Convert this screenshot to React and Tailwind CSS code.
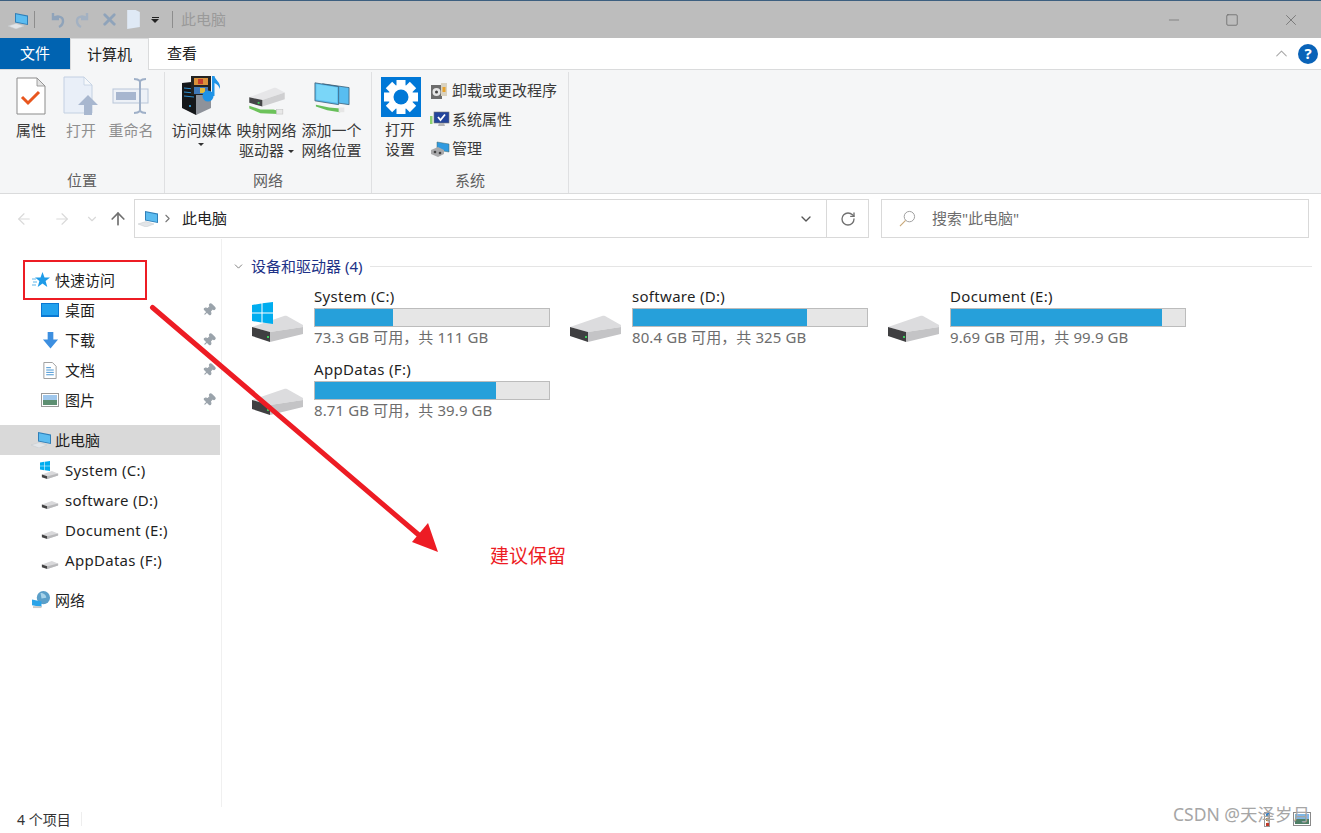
import React from 'react'
import { ArrowLeft, ArrowRight, ArrowUp, ChevronDown, ChevronRight, ChevronUp, RotateCw, Minus, Square, X, Pin } from 'lucide-react'

const font = { fontFamily: '"Noto Sans", "Noto Sans CJK SC", sans-serif' }

const PcIcon = ({ className }) => (
  <svg viewBox="0 0 20 16" className={className}>
    <path d="M7 0l13 2.500v9.500L7 9.500z" fill="#2f7fb8" />
    <path d="M8 1.300l11 2.100v7.600L8 8.800z" fill="#5cbcf0" />
    <path d="M0 13l8-2.500 8 2.500-8 3z" fill="#e2e5e8" stroke="#c4c8cc" strokeWidth="0.5" />
  </svg>
)

const WinLogo = ({ className }) => (
  <svg viewBox="0 0 22 22" className={className}>
    <path d="M0 3.200l9.600-1.400v8.600H0zM10.800 1.600L22 0v10.400H10.800zM0 11.600h9.600v8.600L0 18.800zM10.800 11.600H22V22l-11.200-1.600z" fill="#00adef" />
  </svg>
)

const Drive = ({ className, win }) => (
  <svg viewBox="0 0 56 44" className={className}>
    <path d="M2 27L34 16c1-.3 2-.3 3 0l16 9v2L20 32z" fill="#dcdcde" />
    <path d="M20 32l33-5v7L20 42z" fill="#c4c4c6" />
    <path d="M2 27l18 5v10L2 36z" fill="#3f3f41" />
    <rect x="17" y="36" width="2" height="2" fill="#3ecb5c" />
    {win && <path d="M2 5l9.500-1.500v9H2zM12.500 3.300L23 2v10.500H12.500zM2 13.500h9.500v9L2 21zM12.500 13.500H23V24l-10.500-1.500z" fill="#00adef" />}
  </svg>
)

const TinyDrive = ({ win }) => (
  <span className="relative flex h-[18px] w-[20px] shrink-0 items-end">
    <svg viewBox="0 0 20 10" className="h-[9px] w-[20px]">
      <path d="M1 5l11-4 7 3v2L7 10 1 8z" fill="#d9d9db" />
      <path d="M1 5l6 2v3L1 8z" fill="#444" />
      <path d="M7 7l12-3v2L7 10z" fill="#b8b8ba" />
    </svg>
    {win && <WinLogo className="absolute left-0 top-0 h-[10px] w-[10px]" />}
  </span>
)

const NetDrive = ({ className }) => (
  <svg viewBox="0 0 42 30" className={className}>
    <path d="M2 11L28 1c1-.3 2-.3 3 0l9 5-24 8z" fill="#e6e6e8" />
    <path d="M16 14l24-8v7L16 21z" fill="#cfcfd1" />
    <path d="M2 11l14 3v7L2 17z" fill="#454547" />
    <rect x="11" y="16" width="2" height="2" fill="#3ecb5c" />
    <path d="M2 20l12 4h14l6 2-1 3-19-1-12-5z" fill="#6cc25a" />
    <rect x="31" y="24" width="7" height="5" fill="#e8e8e8" stroke="#bbb" strokeWidth="0.5" />
  </svg>
)

const AddNetwork = ({ className }) => (
  <svg viewBox="0 0 38 34" className={className}>
    <path d="M9 2l28 4v18l-28-4z" fill="#58bdf0" stroke="#3a5a70" strokeWidth="0.8" />
    <path d="M1 1l25 4v19L1 20z" fill="#58bdf0" stroke="#3a5a70" strokeWidth="0.8" />
    <path d="M2.500 2.500l22 3.500v16l-22-3.500z" fill="#7ad6f8" />
    <path d="M2 24l14 3 12 1 3 3-4 1-13-2-12-4z" fill="#67bf5a" />
    <rect x="26" y="27" width="6" height="5" fill="#e6e6e6" />
  </svg>
)

const MediaIcon = ({ className }) => (
  <svg viewBox="0 0 42 40" className={className}>
    <path d="M1 7l19-2v28L15 39 1 32z" fill="#15171a" />
    <path d="M15 10l15-1v23l-15 7z" fill="#8e929a" />
    <path d="M3 12l10 1M3 16l10 1M3 20l10 1" stroke="#2f8fd0" strokeWidth="1" />
    <circle cx="9" cy="30" r="1" fill="#38b6ff" />
    <rect x="10" y="0" width="20" height="19" fill="#222" />
    <rect x="13" y="2" width="14" height="7" fill="#d9913a" />
    <rect x="13" y="11" width="14" height="7" fill="#3f78b8" />
    <rect x="17" y="3" width="5" height="5" fill="#c53d2e" />
    <rect x="19" y="12" width="5" height="5" fill="#e0b93c" />
    <circle cx="27" cy="20" r="5.500" fill="#1f93e6" />
    <path d="M31 0h2.500c.5 4 6.500 6 5.500 13-1-3-3-5-5.500-6v13H31z" fill="#1f93e6" />
  </svg>
)

const PropsIcon = () => (
  <svg viewBox="0 0 30 38" className="h-[38px] w-[30px]">
    <path d="M1 1h20l8 8v28H1z" fill="#fff" stroke="#8b8b8b" strokeWidth="1" />
    <path d="M21 1v8h8z" fill="#e4e4e4" stroke="#8b8b8b" strokeWidth="0.8" />
    <path d="M6 20l6 6 11-11" fill="none" stroke="#e8561e" strokeWidth="3" />
  </svg>
)

const OpenIcon = () => (
  <svg viewBox="0 0 36 40" className="h-[40px] w-[36px]">
    <path d="M1 1h20l8 8v28H1z" fill="#e9eff8" stroke="#c3d0e2" strokeWidth="1" />
    <path d="M21 1v8h8z" fill="#f6f8fb" stroke="#c3d0e2" strokeWidth="0.8" />
    <path d="M25 19l10 10h-6v10h-8V29h-6z" fill="#a8b7cf" />
  </svg>
)

const RenameIcon = () => (
  <svg viewBox="0 0 38 36" className="h-[36px] w-[38px]">
    <rect x="1" y="11" width="35" height="14" fill="#edf1f7" stroke="#b9c6d9" />
    <rect x="4" y="14" width="20" height="8" fill="#a7b6cf" />
    <path d="M22 1c3 0 5 1 6 2 1-1 3-2 6-2M28 3v30M22 35c3 0 5-1 6-2 1 1 3 2 6 2" fill="none" stroke="#9fb0c8" strokeWidth="2" />
  </svg>
)

const Gear = () => (
  <div className="flex h-10 w-10 items-center justify-center bg-[#0078d7]">
    <svg viewBox="0 0 40 40" className="h-10 w-10">
      {[0, 45, 90, 135].map(a => (
        <rect key={a} x="15.500" y="3" width="9" height="34" fill="#fff" transform={`rotate(${a} 20 20)`} />
      ))}
      <circle cx="20" cy="20" r="12.500" fill="#fff" />
      <circle cx="20" cy="20" r="7.500" fill="#0078d7" />
    </svg>
  </div>
)

const UninstallIcon = () => (
  <svg viewBox="0 0 18 18" className="h-[18px] w-[18px]">
    <rect x="1" y="3" width="11" height="14" fill="#6c6c6c" />
    <circle cx="6.500" cy="10" r="4" fill="#e6e6e6" />
    <circle cx="6.500" cy="10" r="1.500" fill="#444" />
    <rect x="11" y="1" width="6" height="13" fill="#d9d2c0" />
    <rect x="12.500" y="5" width="3" height="5" fill="#e8a22c" />
  </svg>
)

const SysPropsIcon = () => (
  <svg viewBox="0 0 20 18" className="h-[18px] w-[20px]">
    <rect x="4" y="1" width="15" height="11" fill="#24459c" stroke="#777" strokeWidth="0.6" />
    <path d="M8 6l2.500 3L15 3.500" fill="none" stroke="#fff" strokeWidth="1.800" />
    <path d="M9 12h5l1 3H8z" fill="#b5b5b5" />
    <rect x="0" y="5" width="2.500" height="8" fill="#8ed16f" />
  </svg>
)

const ManageIcon = () => (
  <svg viewBox="0 0 20 16" className="h-[16px] w-[20px]">
    <path d="M7 1l12 2v8L7 9z" fill="#2f9ae0" stroke="#466" strokeWidth="0.5" />
    <path d="M1 9l7-3 6 3v4l-6 3-7-3z" fill="#a9a9ab" />
    <circle cx="5" cy="11" r="1.300" fill="#444" />
    <circle cx="10" cy="12" r="1.300" fill="#444" />
  </svg>
)

const Caret = () => <span className="inline-block border-x-[3px] border-t-[3px] border-x-transparent border-t-[#333] align-middle" />

const RibbonButton = ({ icon, lines, width, muted, caret, caretBelow }) => (
  <div className={`flex flex-col items-center ${width}`}>
    <div className="flex h-[47px] w-full items-center justify-center">{icon}</div>
    <div className={`mt-px text-center text-[15px] leading-[20px] whitespace-nowrap ${muted ? 'text-[#8f8f8f]' : 'text-[#3a3a3a]'}`}>
      {lines.map((line, i) => (
        <div key={line}>
          {line}
          {caret && i === lines.length - 1 && <span className="ml-[4px]"><Caret /></span>}
        </div>
      ))}
      {caretBelow && <div className="-mt-[1px] leading-[8px]"><Caret /></div>}
    </div>
  </div>
)

const Group = ({ width, label, children }) => (
  <div className={`flex flex-col border-r border-[#dfe0e2] ${width}`}>
    <div className="flex h-[99px] flex-1">{children}</div>
    <div className="h-[23px] text-center text-[15px] leading-[20px] text-[#5f5f5f]">{label}</div>
  </div>
)

const SmallAction = ({ icon, label }) => (
  <div className="flex h-[29px] items-center text-[15px] text-[#3a3a3a]">
    <span className="flex w-[22px] items-center">{icon}</span>
    {label}
  </div>
)

const TitleBar = () => (
  <div className="flex h-[38px] items-center border-t border-[#3c5f80] bg-[#bdbdbd]">
    <PcIcon className="ml-[8px] mt-[3px] h-[16px] w-[20px]" />
    <div className="ml-[6px] h-[17px] w-px bg-[#8d8d8d]" />
    <svg viewBox="0 0 18 18" className="ml-[13px] h-[18px] w-[18px]">
      <path d="M5 2v6h6M5 8c3-4 10-3 10 2 0 3-2 5-4 6" fill="none" stroke="#8fa3ba" strokeWidth="2.400" />
    </svg>
    <svg viewBox="0 0 18 18" className="ml-[8px] h-[18px] w-[18px]">
      <path d="M13 2v6H7M13 8c-3-4-10-3-10 2 0 3 2 5 4 6" fill="none" stroke="#a3b1c2" strokeWidth="2.400" />
    </svg>
    <X className="ml-[8px] h-[19px] w-[19px] text-[#8fa3ba]" strokeWidth={3.500} />
    <svg viewBox="0 0 12 18" className="ml-[8px] h-[19px] w-[13px]">
      <path d="M0 0h8l4 2v14l-12 2z" fill="#dfe9f5" />
    </svg>
    <div className="ml-[11px] flex flex-col items-center">
      <span className="mb-[1px] h-px w-[7px] bg-[#222]" />
      <span className="border-x-[4px] border-t-[4px] border-x-transparent border-t-[#222]" />
    </div>
    <div className="ml-[13px] h-[17px] w-px bg-[#8d8d8d]" />
    <span className="ml-[8px] text-[15px] text-[#9a9a9a]">此电脑</span>
    <div className="ml-auto flex items-center text-[#666]">
      <Minus className="mr-[43px] h-[16px] w-[16px]" strokeWidth={1} />
      <Square className="mr-[43px] h-[14px] w-[14px]" strokeWidth={1.300} absoluteStrokeWidth />
      <X className="mr-[21px] h-[18px] w-[18px]" strokeWidth={1} />
    </div>
  </div>
)

const TabRow = () => (
  <div className="flex h-[32px] items-end border-b border-[#dadbdc] bg-white">
    <div className="flex h-[31px] w-[70px] items-center justify-center self-start bg-[#0063b1] text-[15px] text-white">文件</div>
    <div className="relative top-px flex h-[32px] w-[79px] items-center justify-center border-x border-t border-[#dadbdc] bg-[#f5f6f7] text-[15px] text-[#222]">计算机</div>
    <div className="flex h-[31px] w-[66px] items-center justify-center self-start text-[15px] text-[#222]">查看</div>
    <div className="ml-auto flex h-[31px] items-center self-start">
      <ChevronUp className="mr-[7px] h-[19px] w-[19px] text-[#a8a8a8]" strokeWidth={1.300} />
      <span className="mr-[3px] flex h-[20px] w-[20px] items-center justify-center rounded-full bg-[#0a63b8] text-[15px] font-bold text-white">?</span>
    </div>
  </div>
)

const Ribbon = () => (
  <div className="flex h-[124px] border-b border-[#dadbdc] bg-[#f5f6f7] pt-[2px]">
    <Group width="w-[165px]" label="位置">
      <div className="flex pl-[6px]">
        <RibbonButton width="w-[50px]" icon={<PropsIcon />} lines={['属性']} />
        <RibbonButton width="w-[50px]" icon={<OpenIcon />} lines={['打开']} muted />
        <RibbonButton width="w-[50px]" icon={<RenameIcon />} lines={['重命名']} muted />
      </div>
    </Group>
    <Group width="w-[207px]" label="网络">
      <div className="flex pl-[4px]">
        <RibbonButton width="w-[65px]" icon={<MediaIcon className="h-[40px] w-[42px]" />} lines={['访问媒体']} caretBelow />
        <RibbonButton width="w-[65px]" icon={<NetDrive className="mt-[10px] h-[28px] w-[40px]" />} lines={['映射网络', '驱动器']} caret />
        <RibbonButton width="w-[65px]" icon={<AddNetwork className="mt-[4px] h-[34px] w-[36px]" />} lines={['添加一个', '网络位置']} />
      </div>
    </Group>
    <Group width="w-[197px]" label="系统">
      <div className="flex pl-[9px]">
        <div className="flex w-[40px] flex-col items-center pt-[5px]">
          <Gear />
          <div className="mr-[2px] mt-[2px] text-center text-[15px] leading-[20px] whitespace-nowrap text-[#3a3a3a]">
            打开
            <br />
            设置
          </div>
        </div>
        <div className="ml-[9px] pt-[4px]">
          <SmallAction icon={<UninstallIcon />} label="卸载或更改程序" />
          <SmallAction icon={<SysPropsIcon />} label="系统属性" />
          <SmallAction icon={<ManageIcon />} label="管理" />
        </div>
      </div>
    </Group>
  </div>
)

const AddressBar = () => (
  <div className="flex h-[45px] items-end pb-px">
    <div className="flex w-[134px] items-center self-stretch pt-[5px]">
      <ArrowLeft className="ml-[15px] h-[18px] w-[18px] text-[#d9d9d9]" strokeWidth={1.500} />
      <ArrowRight className="ml-[20px] h-[18px] w-[18px] text-[#d9d9d9]" strokeWidth={1.500} />
      <ChevronDown className="ml-[14px] h-[14px] w-[14px] text-[#d9d9d9]" strokeWidth={2} />
      <ArrowUp className="ml-[9px] h-[20px] w-[20px] text-[#707070]" strokeWidth={2} />
    </div>
    <div className="flex h-[39px] w-[735px] items-center border border-[#d9d9d9]">
      <PcIcon className="ml-[3px] h-[16px] w-[20px]" />
      <ChevronRight className="ml-[3px] h-[13px] w-[13px] text-[#777]" strokeWidth={2} />
      <span className="ml-[8px] text-[15px] text-[#222]">此电脑</span>
      <ChevronDown className="ml-auto mr-[12px] h-[16px] w-[16px] text-[#555]" strokeWidth={2} />
      <div className="h-full w-px bg-[#d9d9d9]" />
      <RotateCw className="ml-[13px] mr-[12px] h-[16px] w-[16px] text-[#707070]" strokeWidth={2} />
    </div>
    <div className="ml-[12px] flex h-[39px] w-[428px] items-center border border-[#d9d9d9]">
      <svg viewBox="0 0 18 18" className="ml-[17px] h-[17px] w-[17px]">
        <circle cx="11" cy="7" r="5.500" fill="none" stroke="#9a9a9a" />
        <path d="M7 11l-6 6" stroke="#c8a878" strokeWidth="1.200" />
      </svg>
      <span className="ml-[16px] text-[15px] text-[#6d6d6d]">搜索"此电脑"</span>
    </div>
  </div>
)

const NavRow = ({ icon, label, indent, selected, pin, latin }) => (
  <div className={`flex h-[30px] items-center text-[15px] text-[#1f1f1f] ${selected ? 'w-[220px] bg-[#d9d9d9]' : ''}`}>
    <span className={`flex w-[20px] shrink-0 items-center justify-center ${indent ? 'ml-[40px]' : 'ml-[31px]'}`}>{icon}</span>
    <span className={`${indent ? 'ml-[5px]' : 'ml-[4px]'} ${latin ? 'tracking-[0.3px]' : ''}`}>{label}</span>
    {pin && <Pin className="ml-auto mr-[5px] h-[14px] w-[14px] rotate-45 fill-[#9aa3ab] text-[#9aa3ab]" />}
  </div>
)

const Sidebar = () => (
  <div className="w-[221px] shrink-0 pt-[26px]">
    <NavRow
      label="快速访问"
      icon={
        <svg viewBox="0 0 18 16" className="h-[16px] w-[18px]">
          <path d="M10.500 0l2 5.500H18l-4.400 3.400L15.300 15l-4.800-3.400L5.700 15l1.700-6.100L3 5.500h5.500z" fill="#1e9be8" />
          <path d="M0 7h4M1 10h4M0 13h4" stroke="#5fb5ea" />
        </svg>
      }
    />
    <NavRow
      indent
      pin
      label="桌面"
      icon={
        <svg viewBox="0 0 18 14" className="h-[14px] w-[18px]">
          <rect width="18" height="14" fill="#0a78d2" />
          <rect x="1" y="1" width="16" height="11" fill="#22a2ee" />
        </svg>
      }
    />
    <NavRow
      indent
      pin
      label="下载"
      icon={
        <svg viewBox="0 0 18 18" className="h-[17px] w-[17px]">
          <path d="M6 0h6v8h5l-8 9.500L1 8h5z" fill="#3d8fe0" />
        </svg>
      }
    />
    <NavRow
      indent
      pin
      label="文档"
      icon={
        <svg viewBox="0 0 14 18" className="h-[17px] w-[14px]">
          <path d="M.5.500h9l4 4v13H.5z" fill="#fff" stroke="#9a9a9a" />
          <path d="M3 6h5M3 8.500h8M3 11h8M3 13.500h8" stroke="#3f8fd0" />
        </svg>
      }
    />
    <NavRow
      indent
      pin
      label="图片"
      icon={
        <svg viewBox="0 0 18 14" className="h-[14px] w-[18px]">
          <rect x=".5" y=".5" width="17" height="13" fill="#fff" stroke="#9a9a9a" />
          <rect x="2" y="2" width="14" height="5" fill="#9fc7ec" />
          <rect x="2" y="7" width="14" height="5" fill="#5d8f72" />
        </svg>
      }
    />
    <div className="mt-[10px]">
      <NavRow selected label="此电脑" icon={<PcIcon className="h-[16px] w-[20px]" />} />
    </div>
    <NavRow indent latin label="System (C:)" icon={<TinyDrive win />} />
    <NavRow indent latin label="software (D:)" icon={<TinyDrive />} />
    <NavRow indent latin label="Document (E:)" icon={<TinyDrive />} />
    <NavRow indent latin label="AppDatas (F:)" icon={<TinyDrive />} />
    <div className="mt-[10px]">
      <NavRow
        label="网络"
        icon={
          <svg viewBox="0 0 20 19" className="h-[18px] w-[19px]">
            <circle cx="12" cy="7" r="7" fill="#5b9fc9" />
            <path d="M9 2c3 0 6 2 6 5l-5 1z" fill="#a7d3ea" />
            <path d="M0 9l10 2v6L0 15z" fill="#2aa3e8" />
            <path d="M1 16h9v2H1z" fill="#c9c9c9" />
          </svg>
        }
      />
    </div>
  </div>
)

const drives = [
  { name: 'System (C:)', free: '73.3 GB 可用，共 111 GB', fill: 'w-[33.5%]', win: true },
  { name: 'software (D:)', free: '80.4 GB 可用，共 325 GB', fill: 'w-[74.5%]' },
  { name: 'Document (E:)', free: '9.69 GB 可用，共 99.9 GB', fill: 'w-[90%]' },
  { name: 'AppDatas (F:)', free: '8.71 GB 可用，共 39.9 GB', fill: 'w-[77.5%]' },
]

const DriveTile = ({ drive }) => (
  <div className="flex h-[73px] items-start">
    <Drive win={drive.win} className="mt-[13px] h-[44px] w-[56px] shrink-0" />
    <div className="ml-[8px] w-[236px]">
      <div className="h-[21px] text-[15px] leading-[18px] tracking-[0.3px] text-[#1f1f1f]">{drive.name}</div>
      <div className="h-[19px] border border-[#bcbcbc] bg-[#e6e6e6]">
        <div className={`h-full bg-[#26a0da] ${drive.fill}`} />
      </div>
      <div className="text-[15px] leading-[20px] tracking-[0.1px] text-[#6d6d6d]">{drive.free}</div>
    </div>
  </div>
)

const Main = () => (
  <div className="min-w-0 flex-1 border-l border-[#f0f0f0] pl-[10px] pt-[15px]">
    <div className="flex h-[24px] items-center">
      <ChevronDown className="h-[13px] w-[13px] text-[#666]" strokeWidth={1.500} />
      <span className="ml-[6px] text-[15px] text-[#1e3287]">设备和驱动器 (4)</span>
      <div className="ml-[8px] mr-[9px] h-px flex-1 bg-[#e5e5e5]" />
    </div>
    <div className="ml-[18px] mt-[9px] grid grid-cols-[repeat(3,318px)]">
      {drives.map(d => (
        <DriveTile key={d.name} drive={d} />
      ))}
    </div>
  </div>
)

const StatusBar = () => (
  <div className="flex h-[26px] items-center pb-[2px] pl-[17px] text-[14px] text-[#333]">
    4 个项目
    <div className="ml-[10px] h-[14px] w-px bg-[#eee]" />
    <div className="ml-auto mr-[10px] flex items-center gap-[23px]">
      <div className="flex h-[15px] w-[6px] flex-col items-center justify-between border border-[#999] bg-white">
        <span className="h-[3px] w-[3px] bg-[#2a7fd0]" />
        <span className="h-[3px] w-[3px] bg-[#b08a2c]" />
        <span className="h-[3px] w-[3px] bg-[#c0392b]" />
      </div>
      <svg viewBox="0 0 18 14" className="h-[14px] w-[18px]">
        <rect x=".5" y=".5" width="17" height="13" fill="#fff" stroke="#8a8a8a" />
        <rect x="2" y="2" width="14" height="5" fill="#7fb7e6" />
        <rect x="2" y="7" width="14" height="5" fill="#4f7f66" />
      </svg>
    </div>
  </div>
)

const Annotations = () => (
  <>
    <div className="absolute left-[23px] top-[260px] h-[40px] w-[124px] border-2 border-[#ed1c24]" />
    <svg viewBox="0 0 1321 833" className="pointer-events-none absolute left-0 top-0 h-[833px] w-[1321px]">
      <path d="M152.500 307.500L420 536" stroke="#ed1c24" strokeWidth="5" strokeLinecap="round" />
      <path d="M438 552L412 542 428 523z" fill="#ed1c24" />
    </svg>
    <span className="absolute left-[490px] top-[543px] text-[19px] leading-[26px] text-[#ed1c24]">建议保留</span>
    <span className="absolute left-[1173px] top-[802px] text-[17.5px] leading-[24px] text-[#a6a6a6]">CSDN @天泽岁月</span>
  </>
)

export default function App() {
  return (
    <div className="relative flex h-[833px] w-[1321px] flex-col overflow-hidden bg-white" style={font}>
      <TitleBar />
      <TabRow />
      <Ribbon />
      <AddressBar />
      <div className="flex min-h-0 flex-1">
        <Sidebar />
        <Main />
      </div>
      <StatusBar />
      <Annotations />
    </div>
  )
}
